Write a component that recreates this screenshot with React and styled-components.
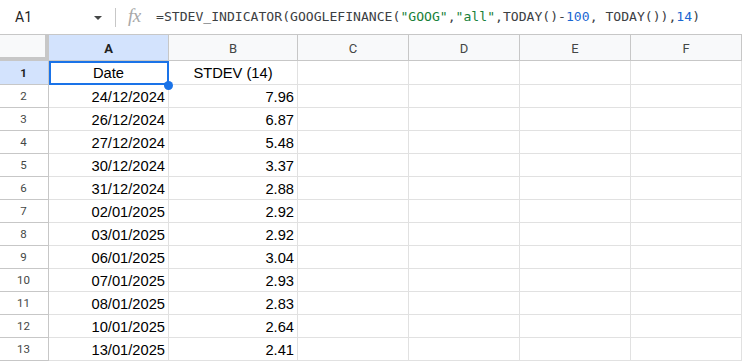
import React from "react";
import styled, { createGlobalStyle } from "styled-components";

const Global = createGlobalStyle`
  html, body { margin: 0; padding: 0; background: #fff; }
  body { width: 742px; height: 361px; overflow: hidden; font-family: "Liberation Sans", Arial, sans-serif; }
`;

const Page = styled.div`
  width: 742px;
  height: 361px;
  display: flex;
  flex-direction: column;
  overflow: hidden;
`;

const FormulaBar = styled.div`
  height: 34px;
  flex: 0 0 34px;
  border-bottom: 1px solid #c7c7c7;
  display: flex;
  align-items: center;
  background: #fff;
`;

const NameBox = styled.div`
  width: 108px;
  padding-left: 15px;
  box-sizing: border-box;
  display: flex;
  align-items: center;
  justify-content: space-between;
  padding-right: 6px;
  font-family: Roboto, "Liberation Sans", sans-serif;
  font-size: 14px;
  color: #1f1f1f;
`;

const Caret = styled.span`
  width: 0;
  height: 0;
  border-left: 4px solid transparent;
  border-right: 4px solid transparent;
  border-top: 4px solid #444746;
  margin-top: 1px;
`;

const Divider = styled.div`
  width: 1px;
  height: 19px;
  background: #c7c7c7;
  margin-left: 7px;
`;

const Fx = styled.span`
  font-family: "Liberation Serif", "Times New Roman", serif;
  font-style: italic;
  font-size: 19px;
  color: #a8a8a8;
  margin-left: 12px;
  width: 28px;
  letter-spacing: -0.5px;
  margin-top: -2px;
`;

const Formula = styled.div`
  font-family: "DejaVu Sans Mono", "Liberation Mono", monospace;
  font-size: 13.1px;
  color: #3c4043;
  white-space: pre;
  margin-top: -1px;
`;

const Str = styled.span`color: #188038;`;
const Num = styled.span`color: #1967d2;`;

const Grid = styled.div`
  display: grid;
  grid-template-columns: 49px 120px 129px repeat(4, 111px);
  grid-template-rows: 26px 24px repeat(12, 23px);
`;

const Corner = styled.div`
  box-sizing: border-box;
  background: #f8f9fa;
  border-right: 4px solid #c7c7c7;
  border-bottom: 4px solid #c7c7c7;
`;

const ColHead = styled.div`
  box-sizing: border-box;
  background: ${(p) => (p.$active ? "#d3e3fd" : "#f8f9fa")};
  border-right: 1px solid #c7c7c7;
  border-bottom: 1px solid #c7c7c7;
  display: flex;
  align-items: center;
  justify-content: center;
  font-family: Roboto, "Liberation Sans", sans-serif;
  font-size: 13px;
  font-weight: ${(p) => (p.$active ? 700 : 400)};
  color: ${(p) => (p.$active ? "#1f1f1f" : "#444746")};
  padding-top: 1px;
`;

const RowHead = styled.div`
  box-sizing: border-box;
  background: ${(p) => (p.$active ? "#d3e3fd" : "#fff")};
  border-right: 1px solid #c7c7c7;
  border-bottom: 1px solid #c7c7c7;
  display: flex;
  align-items: center;
  justify-content: center;
  font-family: Roboto, "Liberation Sans", sans-serif;
  font-size: 11.5px;
  font-weight: ${(p) => (p.$active ? 700 : 400)};
  color: ${(p) => (p.$active ? "#1f1f1f" : "#444746")};
  padding-right: 1px;
`;

const Cell = styled.div`
  box-sizing: border-box;
  position: relative;
  border-right: 1px solid #e1e1e1;
  border-bottom: 1px solid #e1e1e1;
  display: flex;
  align-items: center;
  justify-content: ${(p) => (p.$align === "center" ? "center" : "flex-end")};
  padding: 1px 3px 0 3px;
  font-family: "Liberation Sans", Arial, sans-serif;
  font-size: 14.7px;
  color: #000;
  white-space: nowrap;
`;

const Selection = styled.div`
  position: absolute;
  left: 0;
  top: 0;
  right: -1px;
  bottom: -1px;
  border: 2px solid #1a73e8;
  pointer-events: none;
  z-index: 2;
`;

const Handle = styled.span`
  position: absolute;
  right: -5px;
  bottom: -6px;
  width: 9px;
  height: 9px;
  border-radius: 50%;
  background: #1a73e8;
  z-index: 3;
`;

const cols = ["A", "B", "C", "D", "E", "F"];
const data = [
  ["24/12/2024", "7.96"],
  ["26/12/2024", "6.87"],
  ["27/12/2024", "5.48"],
  ["30/12/2024", "3.37"],
  ["31/12/2024", "2.88"],
  ["02/01/2025", "2.92"],
  ["03/01/2025", "2.92"],
  ["06/01/2025", "3.04"],
  ["07/01/2025", "2.93"],
  ["08/01/2025", "2.83"],
  ["10/01/2025", "2.64"],
  ["13/01/2025", "2.41"],
];

export default function App() {
  return (
    <Page>
      <Global />
      <FormulaBar>
        <NameBox>
          <span>A1</span>
          <Caret />
        </NameBox>
        <Divider />
        <Fx>fx</Fx>
        <Formula>
          =STDEV_INDICATOR(GOOGLEFINANCE(<Str>"GOOG"</Str>,<Str>"all"</Str>,TODAY()-<Num>100</Num>, TODAY()),<Num>14</Num>)
        </Formula>
      </FormulaBar>
      <Grid>
        <Corner />
        {cols.map((c) => (
          <ColHead key={c} $active={c === "A"}>{c}</ColHead>
        ))}
        <RowHead $active>1</RowHead>
        <Cell $align="center">
          Date
          <Selection />
          <Handle />
        </Cell>
        <Cell $align="center">STDEV (14)</Cell>
        <Cell />
        <Cell />
        <Cell />
        <Cell />
        {data.map(([d, v], i) => (
          <React.Fragment key={d}>
            <RowHead>{i + 2}</RowHead>
            <Cell>{d}</Cell>
            <Cell>{v}</Cell>
            <Cell />
            <Cell />
            <Cell />
            <Cell />
          </React.Fragment>
        ))}
      </Grid>
    </Page>
  );
}
